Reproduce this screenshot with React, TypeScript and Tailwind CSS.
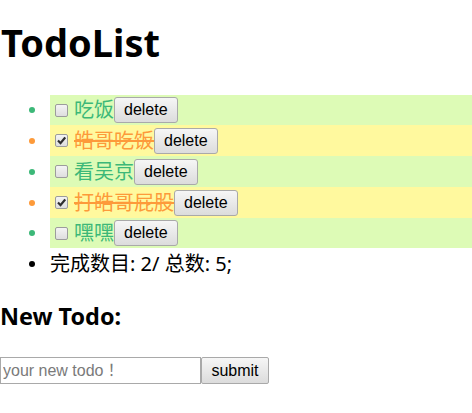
import React from "react";

type Todo = { text: string; done: boolean; h: string };

const todos: Todo[] = [
  { text: "吃饭", done: false, h: "h-[30px]" },
  { text: "皓哥吃饭", done: true, h: "h-[31px]" },
  { text: "看吴京", done: false, h: "h-[31px]" },
  { text: "打皓哥屁股", done: true, h: "h-[31px]" },
  { text: "嘿嘿", done: false, h: "h-[30px]" },
];

function Checkbox({ checked }: { checked: boolean }) {
  return (
    <span className="ml-[5px] mr-[6px] flex h-[13px] w-[13px] shrink-0 items-center justify-center rounded-[2px] border border-[#9c9c9c] bg-gradient-to-b from-[#f4f4f4] to-[#dedede]">
      {checked && (
        <svg width="9" height="9" viewBox="0 0 9 9">
          <path d="M1 4.6 L3.5 7.2 L8.2 1.4" fill="none" stroke="#2f2f2f" strokeWidth="2.2" />
        </svg>
      )}
    </span>
  );
}

export default function App() {
  return (
    <div className="bg-white text-black text-[20px] font-['Noto_Sans','Noto_Sans_CJK_SC',sans-serif] w-[472px] h-[413px] overflow-hidden">
      <h1 className="mt-[18px] mb-[29px] text-[38px] leading-[48px] font-bold pl-[1px]">TodoList</h1>
      <ul>
        {todos.map((t, i) => (
          <li key={i} className={`flex ${t.h}`}>
            <div className="flex w-[50px] shrink-0 items-center">
              <span
                className={
                  t.done
                    ? "ml-[29px] h-[6px] w-[6px] rounded-full bg-[#fd9a3a]"
                    : "ml-[29px] h-[6px] w-[6px] rounded-full bg-[#3cb878]"
                }
              />
            </div>
            <div
              className={
                t.done
                  ? "flex flex-1 items-center bg-[#fff99e]"
                  : "flex flex-1 items-center bg-[#ddfbb6]"
              }
            >
              <Checkbox checked={t.done} />
              <span
                className={
                  t.done
                    ? "leading-[26px] text-[#fd9a3a] line-through decoration-[#fd9a3a]"
                    : "leading-[26px] text-[#3cb878]"
                }
              >
                {t.text}
              </span>
              <button className="h-[26px] rounded-[3px] border border-[#a9a9a9] bg-gradient-to-b from-[#f6f6f6] to-[#dcdcdc] px-[9px] font-['Liberation_Sans',sans-serif] text-[16px] leading-[20px] text-black">
                delete
              </button>
            </div>
          </li>
        ))}
        <li className="flex h-[31px] items-center">
          <div className="flex w-[50px] shrink-0 items-center">
            <span className="ml-[29px] h-[6px] w-[6px] rounded-full bg-black" />
          </div>
          <span className="leading-[26px]">完成数目: 2/ 总数: 5;</span>
        </li>
      </ul>
      <h3 className="mt-[23px] mb-[27px] text-[23.4px] leading-[28px] font-bold">New Todo:</h3>
      <div className="flex">
        <input
          placeholder="your new todo！"
          className="h-[27px] w-[201px] border border-[#a9a9a9] pl-[2px] font-['Liberation_Sans','Noto_Sans_CJK_TC',sans-serif] text-[16px] placeholder:text-[#7a7a7a] outline-none"
        />
        <button className="h-[27px] w-[68px] rounded-[2px] border border-[#a9a9a9] bg-gradient-to-b from-[#f6f6f6] to-[#dcdcdc] font-['Liberation_Sans',sans-serif] text-[16px] text-black">
          submit
        </button>
      </div>
    </div>
  );
}
